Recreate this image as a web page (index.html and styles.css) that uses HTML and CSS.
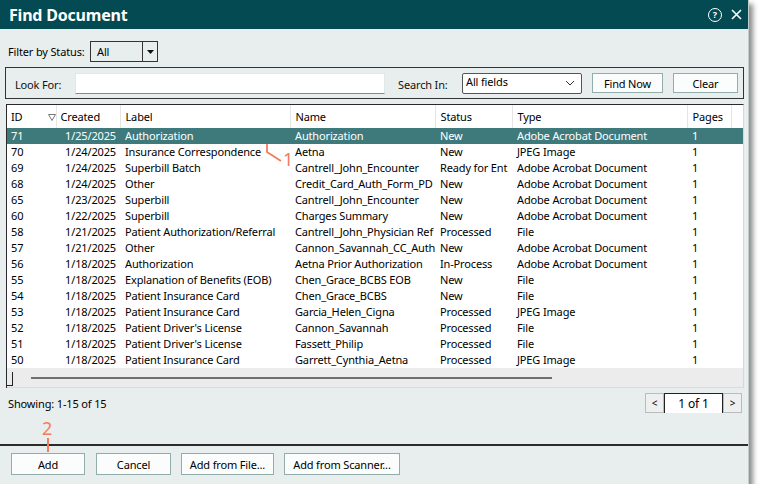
FILE: index.html
```html
<!DOCTYPE html>
<html>
<head>
<meta charset="utf-8">
<link rel="stylesheet" href="styles.css">
</head>
<body>
<div class="dialog">
  <div class="titlebar">
    <div class="title">Find Document</div>
    <div class="tb-icons">
      <span class="help">?</span>
      <svg class="close" width="11" height="11" viewBox="0 0 11 11"><path d="M1 1L10 10M10 1L1 10" stroke="#fff" stroke-width="1.6" fill="none"/></svg>
    </div>
  </div>
  <div class="content">
    <div class="filter-row">
      <span class="filter-label">Filter by Status:</span>
      <div class="combo"><span class="combo-val">All</span><span class="combo-btn"><svg width="7" height="4" viewBox="0 0 7 4"><path d="M0 0H7L3.5 4Z" fill="#111"/></svg></span></div>
    </div>
    <div class="groupbox">
      <span class="lbl lbl-look">Look For:</span>
      <div class="input"></div>
      <span class="lbl lbl-search">Search In:</span>
      <div class="select"><span>All fields</span><svg width="10" height="6" viewBox="0 0 10 6"><path d="M1 1L5 5L9 1" stroke="#333" stroke-width="1" fill="none"/></svg></div>
      <button class="btn btn-find">Find Now</button>
      <button class="btn btn-clear">Clear</button>
    </div>
    <div class="grid">
      <table>
        <colgroup>
          <col class="c-id"><col class="c-created"><col class="c-label"><col class="c-name"><col class="c-status"><col class="c-type"><col class="c-pages"><col class="c-fill">
        </colgroup>
        <thead>
          <tr><th class="th-id"><span>ID</span><svg width="8" height="7" viewBox="0 0 8 7"><path d="M0.5 0.5H7.5L4 6.5Z" stroke="#777" stroke-width="1" fill="none"/></svg></th><th class="th-created">Created</th><th>Label</th><th>Name</th><th>Status</th><th>Type</th><th>Pages</th><th class="th-fill"></th></tr>
        </thead>
        <tbody>
          <tr class="sel"><td>71</td><td class="r">1/25/2025</td><td>Authorization</td><td>Authorization</td><td>New</td><td>Adobe Acrobat Document</td><td>1</td><td></td></tr>
          <tr><td>70</td><td class="r">1/24/2025</td><td>Insurance Correspondence</td><td>Aetna</td><td>New</td><td>JPEG Image</td><td>1</td><td></td></tr>
          <tr><td>69</td><td class="r">1/24/2025</td><td>Superbill Batch</td><td>Cantrell_John_Encounter</td><td>Ready for Ent</td><td>Adobe Acrobat Document</td><td>1</td><td></td></tr>
          <tr><td>68</td><td class="r">1/24/2025</td><td>Other</td><td>Credit_Card_Auth_Form_PD</td><td>New</td><td>Adobe Acrobat Document</td><td>1</td><td></td></tr>
          <tr><td>65</td><td class="r">1/23/2025</td><td>Superbill</td><td>Cantrell_John_Encounter</td><td>New</td><td>Adobe Acrobat Document</td><td>1</td><td></td></tr>
          <tr><td>60</td><td class="r">1/22/2025</td><td>Superbill</td><td>Charges Summary</td><td>New</td><td>Adobe Acrobat Document</td><td>1</td><td></td></tr>
          <tr><td>58</td><td class="r">1/21/2025</td><td>Patient Authorization/Referral</td><td>Cantrell_John_Physician Ref</td><td>Processed</td><td>File</td><td>1</td><td></td></tr>
          <tr><td>57</td><td class="r">1/21/2025</td><td>Other</td><td>Cannon_Savannah_CC_Auth</td><td>New</td><td>Adobe Acrobat Document</td><td>1</td><td></td></tr>
          <tr><td>56</td><td class="r">1/18/2025</td><td>Authorization</td><td>Aetna Prior Authorization</td><td>In-Process</td><td>Adobe Acrobat Document</td><td>1</td><td></td></tr>
          <tr><td>55</td><td class="r">1/18/2025</td><td>Explanation of Benefits (EOB)</td><td>Chen_Grace_BCBS EOB</td><td>New</td><td>File</td><td>1</td><td></td></tr>
          <tr><td>54</td><td class="r">1/18/2025</td><td>Patient Insurance Card</td><td>Chen_Grace_BCBS</td><td>New</td><td>File</td><td>1</td><td></td></tr>
          <tr><td>53</td><td class="r">1/18/2025</td><td>Patient Insurance Card</td><td>Garcia_Helen_Cigna</td><td>Processed</td><td>JPEG Image</td><td>1</td><td></td></tr>
          <tr><td>52</td><td class="r">1/18/2025</td><td>Patient Driver's License</td><td>Cannon_Savannah</td><td>Processed</td><td>File</td><td>1</td><td></td></tr>
          <tr><td>51</td><td class="r">1/18/2025</td><td>Patient Driver's License</td><td>Fassett_Philip</td><td>Processed</td><td>File</td><td>1</td><td></td></tr>
          <tr><td>50</td><td class="r">1/18/2025</td><td>Patient Insurance Card</td><td>Garrett_Cynthia_Aetna</td><td>Processed</td><td>JPEG Image</td><td>1</td><td></td></tr>
        </tbody>
      </table>
      <div class="hscroll"><span class="corner"></span><span class="thumb"></span></div>
    </div>
    <div class="status-row">
      <span class="showing">Showing: 1-15 of 15</span>
      <div class="pager"><span class="pg-btn">&lt;</span><span class="pg-num">1 of 1</span><span class="pg-btn">&gt;</span></div>
    </div>
  </div>
  <div class="footer">
    <button class="btn fbtn b-add">Add</button>
    <button class="btn fbtn b-cancel">Cancel</button>
    <button class="btn fbtn b-file">Add from File...</button>
    <button class="btn fbtn b-scan">Add from Scanner...</button>
  </div>
  <svg class="annot1-line" width="20" height="20" viewBox="0 0 20 20"><path d="M1 0V8L15 17" stroke="#f47c5c" stroke-width="1.8" fill="none"/></svg>
  <span class="annot1">1</span>
  <span class="annot2">2</span>
  <span class="annot2-line"></span>
</div>
</body>
</html>
```

FILE: styles.css
```css
* { box-sizing: border-box; margin: 0; padding: 0; }
body {
  margin: 0;
  background: #ffffff;
  font-family: "Noto Sans", "Open Sans", sans-serif;
  font-size: 11px;
  letter-spacing: -0.15px;
  color: #000;
}
.dialog {
  position: relative;
  width: 749px;
  height: 484px;
  background: #e8eeed;
  border-right: 1px solid #c3cecc;
  box-shadow: 4px 4px 5px rgba(0, 0, 0, 0.45);
  display: flex;
  flex-direction: column;
}
.titlebar {
  height: 29px;
  background: #034a52;
  color: #fff;
  display: flex;
  align-items: center;
  justify-content: space-between;
  padding: 0 6px 0 9px;
}
.title { font-weight: 700; font-size: 16px; letter-spacing: -0.2px; }
.tb-icons { display: flex; align-items: center; gap: 9px; }
.help {
  width: 14px; height: 14px;
  border: 1.2px solid #fff;
  border-radius: 50%;
  font-size: 9px;
  font-weight: 700;
  line-height: 12px;
  text-align: center;
  letter-spacing: 0;
}
.close { display: block; }

.content { padding: 0 4px 0 5px; display: flex; flex-direction: column; }

.filter-row { margin-top: 12px; height: 21px; display: flex; align-items: center; padding-left: 3px; }
.filter-label { width: 82px; }
.combo {
  width: 68px; height: 21px;
  border: 1px solid #333;
  display: flex;
}
.combo-val { flex: 1; padding-left: 6px; line-height: 19px; }
.combo-btn { width: 15px; border-left: 1px solid #333; display: flex; align-items: center; justify-content: center; }

.groupbox {
  margin-top: 5px;
  height: 32px;
  border: 1px solid #333;
  display: flex;
  align-items: center;
  padding-left: 9px;
}
.lbl { color: #111; }
.lbl-look { width: 60px; padding-top: 3px; }
.lbl-search { width: 64px; padding-top: 3px; }
.input {
  width: 310px; height: 21px;
  background: #fff;
  border: 1px solid #e3e6e6;
  border-bottom: 1px solid #8a8a8a;
  margin-right: 13px;
}
.select {
  width: 120px; height: 21px;
  background: #fff;
  border: 1px solid #555;
  border-radius: 2px;
  display: flex;
  align-items: center;
  justify-content: space-between;
  padding: 0 6px 0 3px;
  margin-right: 10px;
}
.select span { margin-top: -4px; }
.btn {
  font-family: inherit;
  font-size: 11px;
  letter-spacing: -0.15px;
  color: #000;
  background: #fbfcfc;
  border: 1px solid #93aeaa;
  height: 20px;
}
.btn-find { width: 71px; margin-right: 10px; }
.btn-clear { width: 65px; }

.grid {
  margin-top: 5px;
  margin-left: 1px;
  width: 738px;
  border-top: 1px solid #2a2a2a;
  border-left: 1px solid #2a2a2a;
  border-right: 1px solid #d3d9d8;
  background: #fff;
}
table { border-collapse: collapse; table-layout: fixed; width: 736px; }
.c-id { width: 49px; }
.c-created { width: 64px; }
.c-label { width: 170px; }
.c-name { width: 145px; }
.c-status { width: 77px; }
.c-type { width: 175px; }
.c-pages { width: 44px; }
.c-fill { width: 12px; }
th {
  height: 23px;
  font-weight: 400;
  text-align: left;
  padding: 0 0 0 5px;
  border-right: 1px solid #e4e6e6;
  white-space: nowrap;
  overflow: hidden;
}
th.th-id { padding-left: 4px; }
th.th-id span { display: inline-block; width: 37px; }
th.th-created { padding-left: 4px; }
th.th-fill { border-right: none; }
td {
  height: 16px;
  padding: 0 0 0 5px;
  white-space: nowrap;
  overflow: hidden;
  line-height: 16px;
}
td:first-child { padding-left: 4px; }
td.r { text-align: right; padding: 0 4px 0 0; }
tr.sel td { background: #3e7a7c; color: #fff; }

.hscroll {
  position: relative;
  height: 20px;
  background: #ececec;
  border-bottom: 1px solid #d8dcdc;
  display: flex;
  align-items: center;
  padding-left: 24px;
}
.thumb { width: 521px; height: 2px; background: #6f6f6f; margin-top: 1px; }
.corner {
  position: absolute;
  left: 5px; top: 4px;
  width: 1px; height: 14px;
  background: #222;
}
.corner::after {
  content: "";
  position: absolute;
  left: -5px; bottom: 0;
  width: 5px; height: 1px;
  background: #222;
}

.status-row {
  margin-top: 5px;
  height: 20px;
  display: flex;
  justify-content: space-between;
  align-items: center;
  padding: 0 2px 0 3px;
}
.pager { display: flex; height: 20px; }
.pg-btn {
  width: 19px;
  background: #eef0f0;
  border: 1px solid #b8bcbc;
  display: flex; align-items: center; justify-content: center;
  font-size: 10px;
}
.pg-num {
  width: 59px;
  background: #fff;
  border: 1px solid #222;
  border-bottom: none;
  display: flex; align-items: center; justify-content: center;
  font-size: 12px;
}

.footer {
  margin-top: auto;
  border-top: 2px solid #2b2b2b;
  padding: 7px 0 9px 11px;
  display: flex;
  gap: 10px;
}
.fbtn { height: 22px; }
.b-add { width: 74px; }
.b-cancel { width: 75px; margin-left: 1px; }
.b-file { width: 93px; }
.b-scan { width: 116px; }

.annot1-line { position: absolute; left: 266px; top: 144px; }
.annot1 {
  position: absolute; left: 283px; top: 149px;
  font-size: 18px; color: #f47c5c; line-height: 20px;
}
.annot2 {
  position: absolute; left: 42px; top: 418px;
  font-size: 18px; color: #f47c5c; line-height: 20px;
}
.annot2-line {
  position: absolute; left: 47px; top: 438px;
  width: 2px; height: 14px; background: #f47c5c;
}
```
